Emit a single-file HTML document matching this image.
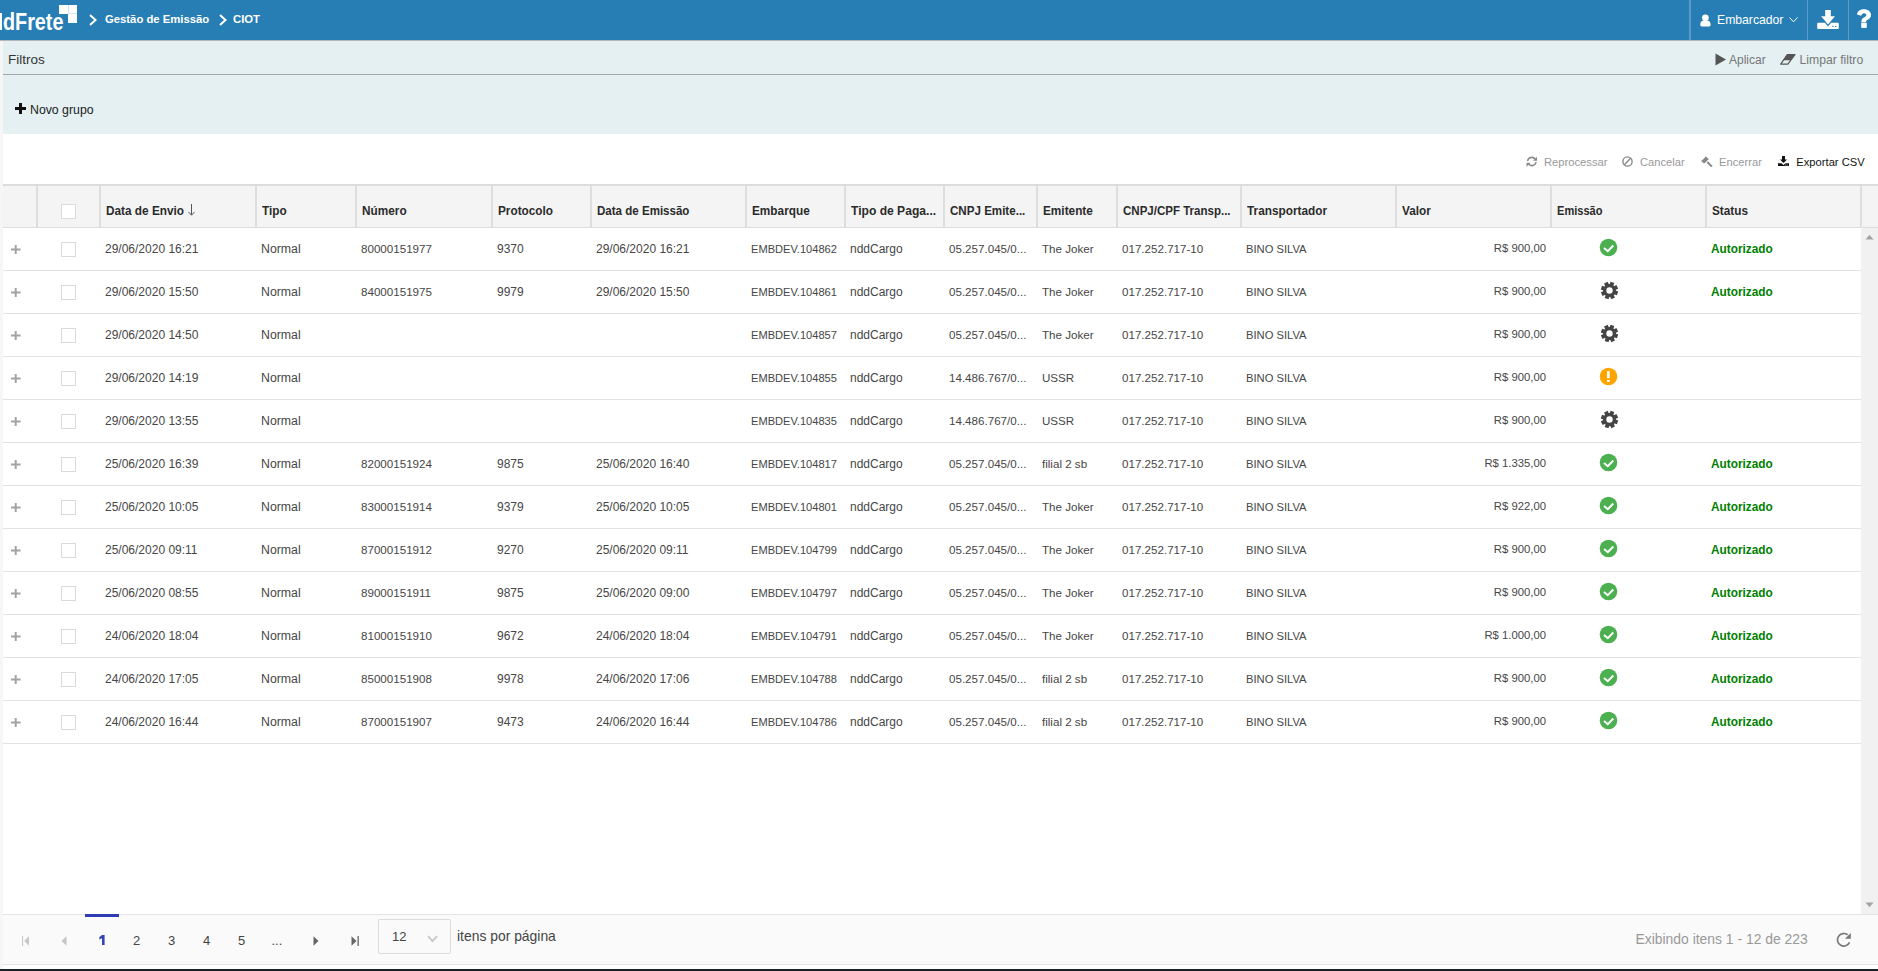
<!DOCTYPE html>
<html><head><meta charset="utf-8"><title>CIOT</title>
<style>
html,body{margin:0;padding:0}
body{width:1878px;height:971px;position:relative;overflow:hidden;background:#fff;font-family:"Liberation Sans", sans-serif}
.t{position:absolute;white-space:nowrap;line-height:1}
.b{position:absolute}
</style></head><body>
<div class="b" style="left:0px;top:0px;width:1878px;height:40px;background:#277eb4"></div>
<div class="t" style="left:3px;top:10.53px;font-size:23px;color:#fff;font-weight:bold;transform:scaleX(0.86);transform-origin:0 0">dFrete</div>
<div class="b" style="left:0px;top:13px;width:2px;height:17px;background:#fff"></div>
<div class="b" style="left:59px;top:5px;width:18px;height:9px;background:#fff"></div>
<div class="b" style="left:68px;top:13px;width:9px;height:10px;background:#fff"></div>
<div class="b" style="left:68px;top:5px;width:1px;height:9px;background:#d6e5f0"></div>
<div class="b" style="left:69px;top:13px;width:8px;height:1px;background:#d6e5f0"></div>
<svg class="b" style="left:89px;top:13.5px" width="8" height="12" viewBox="0 0 8 12"><path d="M1 1 L6.5 6.0 L1 11" fill="none" stroke="#fff" stroke-width="2"/></svg>
<div class="t " style="left:105px;top:14.23px;font-size:11.3px;color:#fff;font-weight:bold;">Gestão de Emissão</div>
<svg class="b" style="left:219px;top:13.5px" width="8" height="12" viewBox="0 0 8 12"><path d="M1 1 L6.5 6.0 L1 11" fill="none" stroke="#fff" stroke-width="2"/></svg>
<div class="t " style="left:233px;top:14.23px;font-size:11.3px;color:#fff;font-weight:bold;">CIOT</div>
<div class="b" style="left:1689px;top:0px;width:2px;height:40px;background:#5a9cc8"></div>
<div class="b" style="left:1807px;top:0px;width:1px;height:40px;background:#5a9cc8"></div>
<div class="b" style="left:1848px;top:0px;width:1px;height:40px;background:#5a9cc8"></div>
<svg class="b" style="left:1700px;top:13.5px" width="12" height="13" viewBox="0 0 12 13"><circle cx="5.4" cy="3.75" r="3.3" fill="#fff"/><path d="M0.3 10.5 C0.3 7.6 1.9 6.4 3.4 6.4 H7.4 C8.9 6.4 10.6 7.6 10.6 10.5 V11 Q10.6 12.4 9.2 12.4 H1.7 Q0.3 12.4 0.3 11 Z" fill="#fff"/></svg>
<div class="t " style="left:1717px;top:13.67px;font-size:12.2px;color:#fff;font-weight:normal;">Embarcador</div>
<svg class="b" style="left:1789px;top:17px" width="9" height="6" viewBox="0 0 9 6"><path d="M0.5 0.5 L4.5 4.8 L8.5 0.5" fill="none" stroke="#fff" stroke-width="1"/></svg>
<svg class="b" style="left:1817px;top:10px" width="22" height="19" viewBox="0 0 22 19"><path d="M8.2 0 H13.8 V6.3 H18 L11.05 14.6 L4.1 6.3 H8.2 Z" fill="#fff"/><path d="M1.2 12.8 H7.95 L11.05 16.5 L14.15 12.8 H20.8 Q21.8 12.8 21.8 13.8 V18 Q21.8 19 20.8 19 H1.2 Q0.2 19 0.2 18 V13.8 Q0.2 12.8 1.2 12.8 Z" fill="#fff"/><rect x="15.3" y="15.9" width="1.3" height="1.1" fill="#277eb4"/><rect x="18" y="15.9" width="1.3" height="1.1" fill="#277eb4"/></svg>
<svg class="b" style="left:1856px;top:9px" width="16" height="20" viewBox="0 0 16 20"><path d="M1 5.5 C1.5 2 4.3 0.3 8 0.3 C12 0.3 15 2.6 15 6 C15 9 13 10 11 11.2 C10 11.8 9.8 12.3 9.8 13.3 H5.3 C5.3 11 5.8 9.8 7.8 8.6 C9.5 7.6 10.3 7.1 10.3 6 C10.3 4.9 9.3 4.2 8 4.2 C6.6 4.2 5.7 5 5.3 6.8 Z" fill="#fff"/><rect x="5.2" y="13.7" width="5.6" height="5.2" fill="#fff"/></svg>
<div class="b" style="left:0px;top:40px;width:3px;height:931px;background:#f6f6f6"></div>
<div class="b" style="left:0px;top:40px;width:1878px;height:1px;background:#b4b8ba"></div>
<div class="b" style="left:3px;top:41px;width:1875px;height:93px;background:#e4f0f2"></div>
<div class="b" style="left:3px;top:74px;width:1875px;height:1px;background:#a3a7a9"></div>
<div class="t " style="left:8px;top:52.57px;font-size:13.5px;color:#333;font-weight:normal;">Filtros</div>
<svg class="b" style="left:1714.6px;top:52.6px" width="12" height="13" viewBox="0 0 12 13"><path d="M0.5 0.5 L11 6.5 L0.5 12.5 Z" fill="#555"/></svg>
<div class="t " style="left:1729px;top:53.84px;font-size:12px;color:#777;font-weight:normal;">Aplicar</div>
<svg class="b" style="left:1779.5px;top:53.5px" width="16" height="11" viewBox="0 0 16 11"><path d="M7.3 0.6 H15 L7.8 10.2 H0.7 Z" fill="none" stroke="#555" stroke-width="1.2" stroke-linejoin="round"/><path d="M7.3 0.6 H15 L10.8 6.2 H3.33 Z" fill="#555"/></svg>
<div class="t " style="left:1799.5px;top:53.67px;font-size:12.2px;color:#777;font-weight:normal;">Limpar filtro</div>
<svg class="b" style="left:15px;top:103px" width="11" height="11" viewBox="0 0 11 11"><path d="M4 0 H7 V4 H11 V7 H7 V11 H4 V7 H0 V4 H4 Z" fill="#111"/></svg>
<div class="t " style="left:30px;top:103.59px;font-size:12.3px;color:#222;font-weight:normal;">Novo grupo</div>
<svg class="b" style="left:1526px;top:156px" width="11" height="11" viewBox="0 0 11 11"><path d="M1.6 5.0 A4.2 4.2 0 0 1 9.2 3.2" fill="none" stroke="#888" stroke-width="1.5"/><path d="M11 0.8 V4.7 H7.1 Z" fill="#888"/><path d="M10 6.0 A4.2 4.2 0 0 1 2.4 7.8" fill="none" stroke="#888" stroke-width="1.5"/><path d="M0.5 10.7 V6.8 H4.4 Z" fill="#888"/></svg>
<div class="t " style="left:1544px;top:156.52px;font-size:11.2px;color:#999;font-weight:normal;">Reprocessar</div>
<svg class="b" style="left:1622px;top:156px" width="11" height="11" viewBox="0 0 11 11"><circle cx="5.5" cy="5.5" r="4.6" fill="none" stroke="#888" stroke-width="1.4"/><path d="M2.3 8.7 L8.7 2.3" stroke="#888" stroke-width="1.4"/></svg>
<div class="t " style="left:1640px;top:156.52px;font-size:11.2px;color:#999;font-weight:normal;">Cancelar</div>
<svg class="b" style="left:1701px;top:155px" width="12" height="12" viewBox="0 0 12 12"><path d="M4.6 1.2 L7.9 4.3 L6.8 4.9 L4.3 7.5 L3.1 8.6 L0 5.9 L1.1 5.2 L3.9 2.4 Z" fill="#888"/><path d="M6.3 7 L10.9 11.6" stroke="#888" stroke-width="2"/></svg>
<div class="t " style="left:1719px;top:156.52px;font-size:11.2px;color:#999;font-weight:normal;">Encerrar</div>
<svg class="b" style="left:1778px;top:155.8px" width="11" height="10.5" viewBox="0 0 11 10.5"><path d="M4 0 H7 V3.6 H9 L5.5 6.9 L2 3.6 H4 Z" fill="#111"/><path d="M0 7.2 H3.4 L5.5 8.9 L7.6 7.2 H11 V10.4 H0 Z" fill="#111"/><rect x="7.3" y="8.6" width="0.8" height="0.8" fill="#fff"/><rect x="8.8" y="8.6" width="0.8" height="0.8" fill="#fff"/></svg>
<div class="t " style="left:1796.3px;top:157.12px;font-size:11.2px;color:#111;font-weight:normal;">Exportar CSV</div>
<div class="b" style="left:3px;top:184px;width:1875px;height:44px;background:#f4f4f4"></div>
<div class="b" style="left:3px;top:184px;width:1875px;height:2px;background:#dcdcdc"></div>
<div class="b" style="left:3px;top:227px;width:1858px;height:1px;background:#dcdcdc"></div>
<div class="b" style="left:36px;top:186px;width:2px;height:41px;background:#dedede"></div>
<div class="b" style="left:99px;top:186px;width:2px;height:41px;background:#dedede"></div>
<div class="b" style="left:255px;top:186px;width:2px;height:41px;background:#dedede"></div>
<div class="b" style="left:355px;top:186px;width:2px;height:41px;background:#dedede"></div>
<div class="b" style="left:491px;top:186px;width:2px;height:41px;background:#dedede"></div>
<div class="b" style="left:590px;top:186px;width:2px;height:41px;background:#dedede"></div>
<div class="b" style="left:745px;top:186px;width:2px;height:41px;background:#dedede"></div>
<div class="b" style="left:844px;top:186px;width:2px;height:41px;background:#dedede"></div>
<div class="b" style="left:943px;top:186px;width:2px;height:41px;background:#dedede"></div>
<div class="b" style="left:1036px;top:186px;width:2px;height:41px;background:#dedede"></div>
<div class="b" style="left:1116px;top:186px;width:2px;height:41px;background:#dedede"></div>
<div class="b" style="left:1240px;top:186px;width:2px;height:41px;background:#dedede"></div>
<div class="b" style="left:1395px;top:186px;width:2px;height:41px;background:#dedede"></div>
<div class="b" style="left:1550px;top:186px;width:2px;height:41px;background:#dedede"></div>
<div class="b" style="left:1705px;top:186px;width:2px;height:41px;background:#dedede"></div>
<div class="b" style="left:1860px;top:186px;width:2px;height:41px;background:#dedede"></div>
<div class="b" style="left:1862px;top:227px;width:16px;height:1px;background:#dcdcdc"></div>
<div class="t " style="left:106px;top:204.63px;font-size:12.6px;color:#2b2b2b;font-weight:bold;transform:scaleX(0.937);transform-origin:0 0">Data de Envio</div>
<div class="t " style="left:262px;top:204.63px;font-size:12.6px;color:#2b2b2b;font-weight:bold;transform:scaleX(0.937);transform-origin:0 0">Tipo</div>
<div class="t " style="left:362px;top:204.63px;font-size:12.6px;color:#2b2b2b;font-weight:bold;transform:scaleX(0.937);transform-origin:0 0">Número</div>
<div class="t " style="left:498px;top:204.63px;font-size:12.6px;color:#2b2b2b;font-weight:bold;transform:scaleX(0.937);transform-origin:0 0">Protocolo</div>
<div class="t " style="left:597px;top:204.63px;font-size:12.6px;color:#2b2b2b;font-weight:bold;transform:scaleX(0.917);transform-origin:0 0">Data de Emissão</div>
<div class="t " style="left:752px;top:204.63px;font-size:12.6px;color:#2b2b2b;font-weight:bold;transform:scaleX(0.937);transform-origin:0 0">Embarque</div>
<div class="t " style="left:851px;top:204.63px;font-size:12.6px;color:#2b2b2b;font-weight:bold;transform:scaleX(0.96);transform-origin:0 0">Tipo de Paga...</div>
<div class="t " style="left:950px;top:204.63px;font-size:12.6px;color:#2b2b2b;font-weight:bold;transform:scaleX(0.92);transform-origin:0 0">CNPJ Emite...</div>
<div class="t " style="left:1043px;top:204.63px;font-size:12.6px;color:#2b2b2b;font-weight:bold;transform:scaleX(0.937);transform-origin:0 0">Emitente</div>
<div class="t " style="left:1123px;top:204.63px;font-size:12.6px;color:#2b2b2b;font-weight:bold;transform:scaleX(0.915);transform-origin:0 0">CNPJ/CPF Transp...</div>
<div class="t " style="left:1247px;top:204.63px;font-size:12.6px;color:#2b2b2b;font-weight:bold;transform:scaleX(0.937);transform-origin:0 0">Transportador</div>
<div class="t " style="left:1402px;top:204.63px;font-size:12.6px;color:#2b2b2b;font-weight:bold;transform:scaleX(0.937);transform-origin:0 0">Valor</div>
<div class="t " style="left:1557px;top:204.63px;font-size:12.6px;color:#2b2b2b;font-weight:bold;transform:scaleX(0.878);transform-origin:0 0">Emissão</div>
<div class="t " style="left:1712px;top:204.63px;font-size:12.6px;color:#2b2b2b;font-weight:bold;transform:scaleX(0.937);transform-origin:0 0">Status</div>
<svg class="b" style="left:188px;top:204px" width="7" height="12" viewBox="0 0 7 12"><path d="M3.5 0 V11" stroke="#555" stroke-width="1"/><path d="M0.5 8 L3.5 11.2 L6.5 8" fill="none" stroke="#555" stroke-width="1"/></svg>
<div class="b" style="left:61px;top:204px;width:15px;height:15px;background:#fff;border:1px solid #dadada;box-sizing:border-box"></div>
<div class="b" style="left:3px;top:270px;width:1858px;height:1px;background:#e2e2e2"></div>
<svg class="b" style="left:11.3px;top:244.8px" width="9.6" height="9.2" viewBox="0 0 9.6 9.2"><path d="M3.7 0 H5.7 V3.6 H9.6 V5.6 H5.7 V9.2 H3.7 V5.6 H0 V3.6 H3.7 Z" fill="#a3a3a3"/></svg>
<div class="b" style="left:61px;top:242px;width:15px;height:15px;background:#fff;border:1px solid #dadada;box-sizing:border-box"></div>
<div class="t " style="left:105px;top:242.84px;font-size:12px;color:#464646;font-weight:normal;">29/06/2020 16:21</div>
<div class="t " style="left:261px;top:242.59px;font-size:12.3px;color:#464646;font-weight:normal;">Normal</div>
<div class="t " style="left:361px;top:243.18px;font-size:11.6px;color:#464646;font-weight:normal;">80000151977</div>
<div class="t " style="left:497px;top:242.84px;font-size:12px;color:#464646;font-weight:normal;">9370</div>
<div class="t " style="left:596px;top:242.84px;font-size:12px;color:#464646;font-weight:normal;">29/06/2020 16:21</div>
<div class="t " style="left:751px;top:243.60px;font-size:11.1px;color:#464646;font-weight:normal;">EMBDEV.104862</div>
<div class="t " style="left:850px;top:242.84px;font-size:12px;color:#464646;font-weight:normal;">nddCargo</div>
<div class="t " style="left:949px;top:243.18px;font-size:11.6px;color:#464646;font-weight:normal;">05.257.045/0...</div>
<div class="t " style="left:1042px;top:243.18px;font-size:11.6px;color:#464646;font-weight:normal;">The Joker</div>
<div class="t " style="left:1122px;top:243.18px;font-size:11.6px;color:#464646;font-weight:normal;">017.252.717-10</div>
<div class="t " style="left:1246px;top:243.52px;font-size:11.2px;color:#464646;font-weight:normal;">BINO SILVA</div>
<div class="t" style="right:332px;top:243.43px;font-size:11.3px;color:#464646">R$ 900,00</div>
<svg class="b" style="left:1598.5px;top:238.3px" width="19" height="19" viewBox="0 0 19 19"><circle cx="9.5" cy="9.5" r="8.8" fill="#4caf50"/><path d="M5 9.9 L8.8 13.2 L14.3 7.5" fill="none" stroke="#fff" stroke-width="2"/></svg>
<div class="t " style="left:1711px;top:243.36px;font-size:12.8px;color:#008000;font-weight:bold;transform:scaleX(0.925);transform-origin:0 0">Autorizado</div>
<div class="b" style="left:3px;top:313px;width:1858px;height:1px;background:#e2e2e2"></div>
<svg class="b" style="left:11.3px;top:287.8px" width="9.6" height="9.2" viewBox="0 0 9.6 9.2"><path d="M3.7 0 H5.7 V3.6 H9.6 V5.6 H5.7 V9.2 H3.7 V5.6 H0 V3.6 H3.7 Z" fill="#a3a3a3"/></svg>
<div class="b" style="left:61px;top:285px;width:15px;height:15px;background:#fff;border:1px solid #dadada;box-sizing:border-box"></div>
<div class="t " style="left:105px;top:285.84px;font-size:12px;color:#464646;font-weight:normal;">29/06/2020 15:50</div>
<div class="t " style="left:261px;top:285.59px;font-size:12.3px;color:#464646;font-weight:normal;">Normal</div>
<div class="t " style="left:361px;top:286.18px;font-size:11.6px;color:#464646;font-weight:normal;">84000151975</div>
<div class="t " style="left:497px;top:285.84px;font-size:12px;color:#464646;font-weight:normal;">9979</div>
<div class="t " style="left:596px;top:285.84px;font-size:12px;color:#464646;font-weight:normal;">29/06/2020 15:50</div>
<div class="t " style="left:751px;top:286.60px;font-size:11.1px;color:#464646;font-weight:normal;">EMBDEV.104861</div>
<div class="t " style="left:850px;top:285.84px;font-size:12px;color:#464646;font-weight:normal;">nddCargo</div>
<div class="t " style="left:949px;top:286.18px;font-size:11.6px;color:#464646;font-weight:normal;">05.257.045/0...</div>
<div class="t " style="left:1042px;top:286.18px;font-size:11.6px;color:#464646;font-weight:normal;">The Joker</div>
<div class="t " style="left:1122px;top:286.18px;font-size:11.6px;color:#464646;font-weight:normal;">017.252.717-10</div>
<div class="t " style="left:1246px;top:286.52px;font-size:11.2px;color:#464646;font-weight:normal;">BINO SILVA</div>
<div class="t" style="right:332px;top:286.43px;font-size:11.3px;color:#464646">R$ 900,00</div>
<svg class="b" style="left:1599.6px;top:281.3px" width="19" height="19" viewBox="0 0 19 19"><g fill="#444" transform="translate(9.5 9.5)"><rect x="-2" y="-8.6" width="4" height="4.5" transform="rotate(20)"/><rect x="-2" y="-8.6" width="4" height="4.5" transform="rotate(65)"/><rect x="-2" y="-8.6" width="4" height="4.5" transform="rotate(110)"/><rect x="-2" y="-8.6" width="4" height="4.5" transform="rotate(155)"/><rect x="-2" y="-8.6" width="4" height="4.5" transform="rotate(200)"/><rect x="-2" y="-8.6" width="4" height="4.5" transform="rotate(245)"/><rect x="-2" y="-8.6" width="4" height="4.5" transform="rotate(290)"/><rect x="-2" y="-8.6" width="4" height="4.5" transform="rotate(335)"/><circle r="6.4"/></g><circle cx="9.5" cy="9.5" r="3.2" fill="#fff"/></svg>
<div class="t " style="left:1711px;top:286.36px;font-size:12.8px;color:#008000;font-weight:bold;transform:scaleX(0.925);transform-origin:0 0">Autorizado</div>
<div class="b" style="left:3px;top:356px;width:1858px;height:1px;background:#e2e2e2"></div>
<svg class="b" style="left:11.3px;top:330.8px" width="9.6" height="9.2" viewBox="0 0 9.6 9.2"><path d="M3.7 0 H5.7 V3.6 H9.6 V5.6 H5.7 V9.2 H3.7 V5.6 H0 V3.6 H3.7 Z" fill="#a3a3a3"/></svg>
<div class="b" style="left:61px;top:328px;width:15px;height:15px;background:#fff;border:1px solid #dadada;box-sizing:border-box"></div>
<div class="t " style="left:105px;top:328.84px;font-size:12px;color:#464646;font-weight:normal;">29/06/2020 14:50</div>
<div class="t " style="left:261px;top:328.59px;font-size:12.3px;color:#464646;font-weight:normal;">Normal</div>
<div class="t " style="left:751px;top:329.60px;font-size:11.1px;color:#464646;font-weight:normal;">EMBDEV.104857</div>
<div class="t " style="left:850px;top:328.84px;font-size:12px;color:#464646;font-weight:normal;">nddCargo</div>
<div class="t " style="left:949px;top:329.18px;font-size:11.6px;color:#464646;font-weight:normal;">05.257.045/0...</div>
<div class="t " style="left:1042px;top:329.18px;font-size:11.6px;color:#464646;font-weight:normal;">The Joker</div>
<div class="t " style="left:1122px;top:329.18px;font-size:11.6px;color:#464646;font-weight:normal;">017.252.717-10</div>
<div class="t " style="left:1246px;top:329.52px;font-size:11.2px;color:#464646;font-weight:normal;">BINO SILVA</div>
<div class="t" style="right:332px;top:329.43px;font-size:11.3px;color:#464646">R$ 900,00</div>
<svg class="b" style="left:1599.6px;top:324.3px" width="19" height="19" viewBox="0 0 19 19"><g fill="#444" transform="translate(9.5 9.5)"><rect x="-2" y="-8.6" width="4" height="4.5" transform="rotate(20)"/><rect x="-2" y="-8.6" width="4" height="4.5" transform="rotate(65)"/><rect x="-2" y="-8.6" width="4" height="4.5" transform="rotate(110)"/><rect x="-2" y="-8.6" width="4" height="4.5" transform="rotate(155)"/><rect x="-2" y="-8.6" width="4" height="4.5" transform="rotate(200)"/><rect x="-2" y="-8.6" width="4" height="4.5" transform="rotate(245)"/><rect x="-2" y="-8.6" width="4" height="4.5" transform="rotate(290)"/><rect x="-2" y="-8.6" width="4" height="4.5" transform="rotate(335)"/><circle r="6.4"/></g><circle cx="9.5" cy="9.5" r="3.2" fill="#fff"/></svg>
<div class="b" style="left:3px;top:399px;width:1858px;height:1px;background:#e2e2e2"></div>
<svg class="b" style="left:11.3px;top:373.8px" width="9.6" height="9.2" viewBox="0 0 9.6 9.2"><path d="M3.7 0 H5.7 V3.6 H9.6 V5.6 H5.7 V9.2 H3.7 V5.6 H0 V3.6 H3.7 Z" fill="#a3a3a3"/></svg>
<div class="b" style="left:61px;top:371px;width:15px;height:15px;background:#fff;border:1px solid #dadada;box-sizing:border-box"></div>
<div class="t " style="left:105px;top:371.84px;font-size:12px;color:#464646;font-weight:normal;">29/06/2020 14:19</div>
<div class="t " style="left:261px;top:371.59px;font-size:12.3px;color:#464646;font-weight:normal;">Normal</div>
<div class="t " style="left:751px;top:372.60px;font-size:11.1px;color:#464646;font-weight:normal;">EMBDEV.104855</div>
<div class="t " style="left:850px;top:371.84px;font-size:12px;color:#464646;font-weight:normal;">nddCargo</div>
<div class="t " style="left:949px;top:372.18px;font-size:11.6px;color:#464646;font-weight:normal;">14.486.767/0...</div>
<div class="t " style="left:1042px;top:372.18px;font-size:11.6px;color:#464646;font-weight:normal;">USSR</div>
<div class="t " style="left:1122px;top:372.18px;font-size:11.6px;color:#464646;font-weight:normal;">017.252.717-10</div>
<div class="t " style="left:1246px;top:372.52px;font-size:11.2px;color:#464646;font-weight:normal;">BINO SILVA</div>
<div class="t" style="right:332px;top:372.43px;font-size:11.3px;color:#464646">R$ 900,00</div>
<svg class="b" style="left:1598.5px;top:367.3px" width="19" height="19" viewBox="0 0 19 19"><circle cx="9.5" cy="9.5" r="8.8" fill="#ffa500"/><rect x="8.1" y="4.1" width="2.6" height="7.2" fill="#fff"/><rect x="8.1" y="13" width="2.6" height="1.9" fill="#fff"/></svg>
<div class="b" style="left:3px;top:442px;width:1858px;height:1px;background:#e2e2e2"></div>
<svg class="b" style="left:11.3px;top:416.8px" width="9.6" height="9.2" viewBox="0 0 9.6 9.2"><path d="M3.7 0 H5.7 V3.6 H9.6 V5.6 H5.7 V9.2 H3.7 V5.6 H0 V3.6 H3.7 Z" fill="#a3a3a3"/></svg>
<div class="b" style="left:61px;top:414px;width:15px;height:15px;background:#fff;border:1px solid #dadada;box-sizing:border-box"></div>
<div class="t " style="left:105px;top:414.84px;font-size:12px;color:#464646;font-weight:normal;">29/06/2020 13:55</div>
<div class="t " style="left:261px;top:414.59px;font-size:12.3px;color:#464646;font-weight:normal;">Normal</div>
<div class="t " style="left:751px;top:415.60px;font-size:11.1px;color:#464646;font-weight:normal;">EMBDEV.104835</div>
<div class="t " style="left:850px;top:414.84px;font-size:12px;color:#464646;font-weight:normal;">nddCargo</div>
<div class="t " style="left:949px;top:415.18px;font-size:11.6px;color:#464646;font-weight:normal;">14.486.767/0...</div>
<div class="t " style="left:1042px;top:415.18px;font-size:11.6px;color:#464646;font-weight:normal;">USSR</div>
<div class="t " style="left:1122px;top:415.18px;font-size:11.6px;color:#464646;font-weight:normal;">017.252.717-10</div>
<div class="t " style="left:1246px;top:415.52px;font-size:11.2px;color:#464646;font-weight:normal;">BINO SILVA</div>
<div class="t" style="right:332px;top:415.43px;font-size:11.3px;color:#464646">R$ 900,00</div>
<svg class="b" style="left:1599.6px;top:410.3px" width="19" height="19" viewBox="0 0 19 19"><g fill="#444" transform="translate(9.5 9.5)"><rect x="-2" y="-8.6" width="4" height="4.5" transform="rotate(20)"/><rect x="-2" y="-8.6" width="4" height="4.5" transform="rotate(65)"/><rect x="-2" y="-8.6" width="4" height="4.5" transform="rotate(110)"/><rect x="-2" y="-8.6" width="4" height="4.5" transform="rotate(155)"/><rect x="-2" y="-8.6" width="4" height="4.5" transform="rotate(200)"/><rect x="-2" y="-8.6" width="4" height="4.5" transform="rotate(245)"/><rect x="-2" y="-8.6" width="4" height="4.5" transform="rotate(290)"/><rect x="-2" y="-8.6" width="4" height="4.5" transform="rotate(335)"/><circle r="6.4"/></g><circle cx="9.5" cy="9.5" r="3.2" fill="#fff"/></svg>
<div class="b" style="left:3px;top:485px;width:1858px;height:1px;background:#e2e2e2"></div>
<svg class="b" style="left:11.3px;top:459.8px" width="9.6" height="9.2" viewBox="0 0 9.6 9.2"><path d="M3.7 0 H5.7 V3.6 H9.6 V5.6 H5.7 V9.2 H3.7 V5.6 H0 V3.6 H3.7 Z" fill="#a3a3a3"/></svg>
<div class="b" style="left:61px;top:457px;width:15px;height:15px;background:#fff;border:1px solid #dadada;box-sizing:border-box"></div>
<div class="t " style="left:105px;top:457.84px;font-size:12px;color:#464646;font-weight:normal;">25/06/2020 16:39</div>
<div class="t " style="left:261px;top:457.59px;font-size:12.3px;color:#464646;font-weight:normal;">Normal</div>
<div class="t " style="left:361px;top:458.18px;font-size:11.6px;color:#464646;font-weight:normal;">82000151924</div>
<div class="t " style="left:497px;top:457.84px;font-size:12px;color:#464646;font-weight:normal;">9875</div>
<div class="t " style="left:596px;top:457.84px;font-size:12px;color:#464646;font-weight:normal;">25/06/2020 16:40</div>
<div class="t " style="left:751px;top:458.60px;font-size:11.1px;color:#464646;font-weight:normal;">EMBDEV.104817</div>
<div class="t " style="left:850px;top:457.84px;font-size:12px;color:#464646;font-weight:normal;">nddCargo</div>
<div class="t " style="left:949px;top:458.18px;font-size:11.6px;color:#464646;font-weight:normal;">05.257.045/0...</div>
<div class="t " style="left:1042px;top:458.18px;font-size:11.6px;color:#464646;font-weight:normal;">filial 2 sb</div>
<div class="t " style="left:1122px;top:458.18px;font-size:11.6px;color:#464646;font-weight:normal;">017.252.717-10</div>
<div class="t " style="left:1246px;top:458.52px;font-size:11.2px;color:#464646;font-weight:normal;">BINO SILVA</div>
<div class="t" style="right:332px;top:458.43px;font-size:11.3px;color:#464646">R$ 1.335,00</div>
<svg class="b" style="left:1598.5px;top:453.3px" width="19" height="19" viewBox="0 0 19 19"><circle cx="9.5" cy="9.5" r="8.8" fill="#4caf50"/><path d="M5 9.9 L8.8 13.2 L14.3 7.5" fill="none" stroke="#fff" stroke-width="2"/></svg>
<div class="t " style="left:1711px;top:458.36px;font-size:12.8px;color:#008000;font-weight:bold;transform:scaleX(0.925);transform-origin:0 0">Autorizado</div>
<div class="b" style="left:3px;top:528px;width:1858px;height:1px;background:#e2e2e2"></div>
<svg class="b" style="left:11.3px;top:502.8px" width="9.6" height="9.2" viewBox="0 0 9.6 9.2"><path d="M3.7 0 H5.7 V3.6 H9.6 V5.6 H5.7 V9.2 H3.7 V5.6 H0 V3.6 H3.7 Z" fill="#a3a3a3"/></svg>
<div class="b" style="left:61px;top:500px;width:15px;height:15px;background:#fff;border:1px solid #dadada;box-sizing:border-box"></div>
<div class="t " style="left:105px;top:500.84px;font-size:12px;color:#464646;font-weight:normal;">25/06/2020 10:05</div>
<div class="t " style="left:261px;top:500.59px;font-size:12.3px;color:#464646;font-weight:normal;">Normal</div>
<div class="t " style="left:361px;top:501.18px;font-size:11.6px;color:#464646;font-weight:normal;">83000151914</div>
<div class="t " style="left:497px;top:500.84px;font-size:12px;color:#464646;font-weight:normal;">9379</div>
<div class="t " style="left:596px;top:500.84px;font-size:12px;color:#464646;font-weight:normal;">25/06/2020 10:05</div>
<div class="t " style="left:751px;top:501.60px;font-size:11.1px;color:#464646;font-weight:normal;">EMBDEV.104801</div>
<div class="t " style="left:850px;top:500.84px;font-size:12px;color:#464646;font-weight:normal;">nddCargo</div>
<div class="t " style="left:949px;top:501.18px;font-size:11.6px;color:#464646;font-weight:normal;">05.257.045/0...</div>
<div class="t " style="left:1042px;top:501.18px;font-size:11.6px;color:#464646;font-weight:normal;">The Joker</div>
<div class="t " style="left:1122px;top:501.18px;font-size:11.6px;color:#464646;font-weight:normal;">017.252.717-10</div>
<div class="t " style="left:1246px;top:501.52px;font-size:11.2px;color:#464646;font-weight:normal;">BINO SILVA</div>
<div class="t" style="right:332px;top:501.43px;font-size:11.3px;color:#464646">R$ 922,00</div>
<svg class="b" style="left:1598.5px;top:496.3px" width="19" height="19" viewBox="0 0 19 19"><circle cx="9.5" cy="9.5" r="8.8" fill="#4caf50"/><path d="M5 9.9 L8.8 13.2 L14.3 7.5" fill="none" stroke="#fff" stroke-width="2"/></svg>
<div class="t " style="left:1711px;top:501.36px;font-size:12.8px;color:#008000;font-weight:bold;transform:scaleX(0.925);transform-origin:0 0">Autorizado</div>
<div class="b" style="left:3px;top:571px;width:1858px;height:1px;background:#e2e2e2"></div>
<svg class="b" style="left:11.3px;top:545.8px" width="9.6" height="9.2" viewBox="0 0 9.6 9.2"><path d="M3.7 0 H5.7 V3.6 H9.6 V5.6 H5.7 V9.2 H3.7 V5.6 H0 V3.6 H3.7 Z" fill="#a3a3a3"/></svg>
<div class="b" style="left:61px;top:543px;width:15px;height:15px;background:#fff;border:1px solid #dadada;box-sizing:border-box"></div>
<div class="t " style="left:105px;top:543.84px;font-size:12px;color:#464646;font-weight:normal;">25/06/2020 09:11</div>
<div class="t " style="left:261px;top:543.59px;font-size:12.3px;color:#464646;font-weight:normal;">Normal</div>
<div class="t " style="left:361px;top:544.18px;font-size:11.6px;color:#464646;font-weight:normal;">87000151912</div>
<div class="t " style="left:497px;top:543.84px;font-size:12px;color:#464646;font-weight:normal;">9270</div>
<div class="t " style="left:596px;top:543.84px;font-size:12px;color:#464646;font-weight:normal;">25/06/2020 09:11</div>
<div class="t " style="left:751px;top:544.60px;font-size:11.1px;color:#464646;font-weight:normal;">EMBDEV.104799</div>
<div class="t " style="left:850px;top:543.84px;font-size:12px;color:#464646;font-weight:normal;">nddCargo</div>
<div class="t " style="left:949px;top:544.18px;font-size:11.6px;color:#464646;font-weight:normal;">05.257.045/0...</div>
<div class="t " style="left:1042px;top:544.18px;font-size:11.6px;color:#464646;font-weight:normal;">The Joker</div>
<div class="t " style="left:1122px;top:544.18px;font-size:11.6px;color:#464646;font-weight:normal;">017.252.717-10</div>
<div class="t " style="left:1246px;top:544.52px;font-size:11.2px;color:#464646;font-weight:normal;">BINO SILVA</div>
<div class="t" style="right:332px;top:544.43px;font-size:11.3px;color:#464646">R$ 900,00</div>
<svg class="b" style="left:1598.5px;top:539.3px" width="19" height="19" viewBox="0 0 19 19"><circle cx="9.5" cy="9.5" r="8.8" fill="#4caf50"/><path d="M5 9.9 L8.8 13.2 L14.3 7.5" fill="none" stroke="#fff" stroke-width="2"/></svg>
<div class="t " style="left:1711px;top:544.36px;font-size:12.8px;color:#008000;font-weight:bold;transform:scaleX(0.925);transform-origin:0 0">Autorizado</div>
<div class="b" style="left:3px;top:614px;width:1858px;height:1px;background:#e2e2e2"></div>
<svg class="b" style="left:11.3px;top:588.8px" width="9.6" height="9.2" viewBox="0 0 9.6 9.2"><path d="M3.7 0 H5.7 V3.6 H9.6 V5.6 H5.7 V9.2 H3.7 V5.6 H0 V3.6 H3.7 Z" fill="#a3a3a3"/></svg>
<div class="b" style="left:61px;top:586px;width:15px;height:15px;background:#fff;border:1px solid #dadada;box-sizing:border-box"></div>
<div class="t " style="left:105px;top:586.84px;font-size:12px;color:#464646;font-weight:normal;">25/06/2020 08:55</div>
<div class="t " style="left:261px;top:586.59px;font-size:12.3px;color:#464646;font-weight:normal;">Normal</div>
<div class="t " style="left:361px;top:587.18px;font-size:11.6px;color:#464646;font-weight:normal;">89000151911</div>
<div class="t " style="left:497px;top:586.84px;font-size:12px;color:#464646;font-weight:normal;">9875</div>
<div class="t " style="left:596px;top:586.84px;font-size:12px;color:#464646;font-weight:normal;">25/06/2020 09:00</div>
<div class="t " style="left:751px;top:587.60px;font-size:11.1px;color:#464646;font-weight:normal;">EMBDEV.104797</div>
<div class="t " style="left:850px;top:586.84px;font-size:12px;color:#464646;font-weight:normal;">nddCargo</div>
<div class="t " style="left:949px;top:587.18px;font-size:11.6px;color:#464646;font-weight:normal;">05.257.045/0...</div>
<div class="t " style="left:1042px;top:587.18px;font-size:11.6px;color:#464646;font-weight:normal;">The Joker</div>
<div class="t " style="left:1122px;top:587.18px;font-size:11.6px;color:#464646;font-weight:normal;">017.252.717-10</div>
<div class="t " style="left:1246px;top:587.52px;font-size:11.2px;color:#464646;font-weight:normal;">BINO SILVA</div>
<div class="t" style="right:332px;top:587.43px;font-size:11.3px;color:#464646">R$ 900,00</div>
<svg class="b" style="left:1598.5px;top:582.3px" width="19" height="19" viewBox="0 0 19 19"><circle cx="9.5" cy="9.5" r="8.8" fill="#4caf50"/><path d="M5 9.9 L8.8 13.2 L14.3 7.5" fill="none" stroke="#fff" stroke-width="2"/></svg>
<div class="t " style="left:1711px;top:587.36px;font-size:12.8px;color:#008000;font-weight:bold;transform:scaleX(0.925);transform-origin:0 0">Autorizado</div>
<div class="b" style="left:3px;top:657px;width:1858px;height:1px;background:#e2e2e2"></div>
<svg class="b" style="left:11.3px;top:631.8px" width="9.6" height="9.2" viewBox="0 0 9.6 9.2"><path d="M3.7 0 H5.7 V3.6 H9.6 V5.6 H5.7 V9.2 H3.7 V5.6 H0 V3.6 H3.7 Z" fill="#a3a3a3"/></svg>
<div class="b" style="left:61px;top:629px;width:15px;height:15px;background:#fff;border:1px solid #dadada;box-sizing:border-box"></div>
<div class="t " style="left:105px;top:629.84px;font-size:12px;color:#464646;font-weight:normal;">24/06/2020 18:04</div>
<div class="t " style="left:261px;top:629.59px;font-size:12.3px;color:#464646;font-weight:normal;">Normal</div>
<div class="t " style="left:361px;top:630.18px;font-size:11.6px;color:#464646;font-weight:normal;">81000151910</div>
<div class="t " style="left:497px;top:629.84px;font-size:12px;color:#464646;font-weight:normal;">9672</div>
<div class="t " style="left:596px;top:629.84px;font-size:12px;color:#464646;font-weight:normal;">24/06/2020 18:04</div>
<div class="t " style="left:751px;top:630.60px;font-size:11.1px;color:#464646;font-weight:normal;">EMBDEV.104791</div>
<div class="t " style="left:850px;top:629.84px;font-size:12px;color:#464646;font-weight:normal;">nddCargo</div>
<div class="t " style="left:949px;top:630.18px;font-size:11.6px;color:#464646;font-weight:normal;">05.257.045/0...</div>
<div class="t " style="left:1042px;top:630.18px;font-size:11.6px;color:#464646;font-weight:normal;">The Joker</div>
<div class="t " style="left:1122px;top:630.18px;font-size:11.6px;color:#464646;font-weight:normal;">017.252.717-10</div>
<div class="t " style="left:1246px;top:630.52px;font-size:11.2px;color:#464646;font-weight:normal;">BINO SILVA</div>
<div class="t" style="right:332px;top:630.43px;font-size:11.3px;color:#464646">R$ 1.000,00</div>
<svg class="b" style="left:1598.5px;top:625.3px" width="19" height="19" viewBox="0 0 19 19"><circle cx="9.5" cy="9.5" r="8.8" fill="#4caf50"/><path d="M5 9.9 L8.8 13.2 L14.3 7.5" fill="none" stroke="#fff" stroke-width="2"/></svg>
<div class="t " style="left:1711px;top:630.36px;font-size:12.8px;color:#008000;font-weight:bold;transform:scaleX(0.925);transform-origin:0 0">Autorizado</div>
<div class="b" style="left:3px;top:700px;width:1858px;height:1px;background:#e2e2e2"></div>
<svg class="b" style="left:11.3px;top:674.8px" width="9.6" height="9.2" viewBox="0 0 9.6 9.2"><path d="M3.7 0 H5.7 V3.6 H9.6 V5.6 H5.7 V9.2 H3.7 V5.6 H0 V3.6 H3.7 Z" fill="#a3a3a3"/></svg>
<div class="b" style="left:61px;top:672px;width:15px;height:15px;background:#fff;border:1px solid #dadada;box-sizing:border-box"></div>
<div class="t " style="left:105px;top:672.84px;font-size:12px;color:#464646;font-weight:normal;">24/06/2020 17:05</div>
<div class="t " style="left:261px;top:672.59px;font-size:12.3px;color:#464646;font-weight:normal;">Normal</div>
<div class="t " style="left:361px;top:673.18px;font-size:11.6px;color:#464646;font-weight:normal;">85000151908</div>
<div class="t " style="left:497px;top:672.84px;font-size:12px;color:#464646;font-weight:normal;">9978</div>
<div class="t " style="left:596px;top:672.84px;font-size:12px;color:#464646;font-weight:normal;">24/06/2020 17:06</div>
<div class="t " style="left:751px;top:673.60px;font-size:11.1px;color:#464646;font-weight:normal;">EMBDEV.104788</div>
<div class="t " style="left:850px;top:672.84px;font-size:12px;color:#464646;font-weight:normal;">nddCargo</div>
<div class="t " style="left:949px;top:673.18px;font-size:11.6px;color:#464646;font-weight:normal;">05.257.045/0...</div>
<div class="t " style="left:1042px;top:673.18px;font-size:11.6px;color:#464646;font-weight:normal;">filial 2 sb</div>
<div class="t " style="left:1122px;top:673.18px;font-size:11.6px;color:#464646;font-weight:normal;">017.252.717-10</div>
<div class="t " style="left:1246px;top:673.52px;font-size:11.2px;color:#464646;font-weight:normal;">BINO SILVA</div>
<div class="t" style="right:332px;top:673.43px;font-size:11.3px;color:#464646">R$ 900,00</div>
<svg class="b" style="left:1598.5px;top:668.3px" width="19" height="19" viewBox="0 0 19 19"><circle cx="9.5" cy="9.5" r="8.8" fill="#4caf50"/><path d="M5 9.9 L8.8 13.2 L14.3 7.5" fill="none" stroke="#fff" stroke-width="2"/></svg>
<div class="t " style="left:1711px;top:673.36px;font-size:12.8px;color:#008000;font-weight:bold;transform:scaleX(0.925);transform-origin:0 0">Autorizado</div>
<div class="b" style="left:3px;top:743px;width:1858px;height:1px;background:#e2e2e2"></div>
<svg class="b" style="left:11.3px;top:717.8px" width="9.6" height="9.2" viewBox="0 0 9.6 9.2"><path d="M3.7 0 H5.7 V3.6 H9.6 V5.6 H5.7 V9.2 H3.7 V5.6 H0 V3.6 H3.7 Z" fill="#a3a3a3"/></svg>
<div class="b" style="left:61px;top:715px;width:15px;height:15px;background:#fff;border:1px solid #dadada;box-sizing:border-box"></div>
<div class="t " style="left:105px;top:715.84px;font-size:12px;color:#464646;font-weight:normal;">24/06/2020 16:44</div>
<div class="t " style="left:261px;top:715.59px;font-size:12.3px;color:#464646;font-weight:normal;">Normal</div>
<div class="t " style="left:361px;top:716.18px;font-size:11.6px;color:#464646;font-weight:normal;">87000151907</div>
<div class="t " style="left:497px;top:715.84px;font-size:12px;color:#464646;font-weight:normal;">9473</div>
<div class="t " style="left:596px;top:715.84px;font-size:12px;color:#464646;font-weight:normal;">24/06/2020 16:44</div>
<div class="t " style="left:751px;top:716.60px;font-size:11.1px;color:#464646;font-weight:normal;">EMBDEV.104786</div>
<div class="t " style="left:850px;top:715.84px;font-size:12px;color:#464646;font-weight:normal;">nddCargo</div>
<div class="t " style="left:949px;top:716.18px;font-size:11.6px;color:#464646;font-weight:normal;">05.257.045/0...</div>
<div class="t " style="left:1042px;top:716.18px;font-size:11.6px;color:#464646;font-weight:normal;">filial 2 sb</div>
<div class="t " style="left:1122px;top:716.18px;font-size:11.6px;color:#464646;font-weight:normal;">017.252.717-10</div>
<div class="t " style="left:1246px;top:716.52px;font-size:11.2px;color:#464646;font-weight:normal;">BINO SILVA</div>
<div class="t" style="right:332px;top:716.43px;font-size:11.3px;color:#464646">R$ 900,00</div>
<svg class="b" style="left:1598.5px;top:711.3px" width="19" height="19" viewBox="0 0 19 19"><circle cx="9.5" cy="9.5" r="8.8" fill="#4caf50"/><path d="M5 9.9 L8.8 13.2 L14.3 7.5" fill="none" stroke="#fff" stroke-width="2"/></svg>
<div class="t " style="left:1711px;top:716.36px;font-size:12.8px;color:#008000;font-weight:bold;transform:scaleX(0.925);transform-origin:0 0">Autorizado</div>
<div class="b" style="left:1861px;top:228px;width:17px;height:686px;background:#f1f1f1"></div>
<svg class="b" style="left:1865px;top:234px" width="9" height="6" viewBox="0 0 9 6"><path d="M0.5 5.5 L4.5 0.8 L8.5 5.5 Z" fill="#a3a3a3"/></svg>
<svg class="b" style="left:1865px;top:902px" width="9" height="6" viewBox="0 0 9 6"><path d="M0.5 0.5 L4.5 5.2 L8.5 0.5 Z" fill="#a3a3a3"/></svg>
<div class="b" style="left:3px;top:914px;width:1875px;height:51px;background:#fafafa"></div>
<div class="b" style="left:3px;top:914px;width:1875px;height:1px;background:#e4e4e4"></div>
<div class="b" style="left:3px;top:964px;width:1875px;height:1px;background:#e4e4e4"></div>
<div class="b" style="left:3px;top:965px;width:1875px;height:4px;background:#fff"></div>
<div class="b" style="left:0px;top:969px;width:1878px;height:2px;background:#1b2128"></div>
<div class="b" style="left:85px;top:914px;width:34px;height:3px;background:#2f3db5"></div>
<svg class="b" style="left:22px;top:936px" width="8" height="10" viewBox="0 0 8 10"><rect x="0" y="0" width="1.1" height="10" fill="#c8c8c8"/><path d="M7 0 L2.2 4.9 L7 9.8 Z" fill="#c8c8c8"/></svg>
<svg class="b" style="left:61px;top:936px" width="6" height="10" viewBox="0 0 6 10"><path d="M5.5 0.2 L0.5 5 L5.5 9.8 Z" fill="#c4c4c4"/></svg>
<svg class="b" style="left:98.6px;top:934.9px" width="6" height="10.2" viewBox="0 0 6 10.2"><path d="M3 0 H5.6 V10 H3 V3.2 L0.3 4.6 V2.2 Z" fill="#3343b3"/></svg>
<div class="t " style="left:133px;top:934.00px;font-size:13px;color:#444;font-weight:normal;">2</div>
<div class="t " style="left:168px;top:934.00px;font-size:13px;color:#444;font-weight:normal;">3</div>
<div class="t " style="left:203px;top:934.00px;font-size:13px;color:#444;font-weight:normal;">4</div>
<div class="t " style="left:238px;top:934.00px;font-size:13px;color:#444;font-weight:normal;">5</div>
<div class="t " style="left:271.5px;top:934.00px;font-size:13px;color:#444;font-weight:normal;">...</div>
<svg class="b" style="left:313px;top:936px" width="6" height="10" viewBox="0 0 6 10"><path d="M0.5 0.2 L5.5 5 L0.5 9.8 Z" fill="#666"/></svg>
<svg class="b" style="left:351px;top:936px" width="8" height="10" viewBox="0 0 8 10"><path d="M0.5 0.2 L5.5 5 L0.5 9.8 Z" fill="#666"/><rect x="6.5" y="0" width="1.3" height="10" fill="#666"/></svg>
<div class="b" style="left:378px;top:919px;width:73px;height:35px;border:1px solid #dcdcdc;border-radius:2px;box-sizing:border-box;background:#fafafa"></div>
<div class="t " style="left:392px;top:930.00px;font-size:13px;color:#444;font-weight:normal;">12</div>
<svg class="b" style="left:427px;top:935px" width="11" height="8" viewBox="0 0 11 8"><path d="M1 1.2 L5.5 6.2 L10 1.2" fill="none" stroke="#c8c8c8" stroke-width="1.8"/></svg>
<div class="t " style="left:457px;top:929.63px;font-size:13.9px;color:#444;font-weight:normal;">itens por página</div>
<div class="t " style="left:1635.5px;top:933.23px;font-size:13.9px;color:#999;font-weight:normal;">Exibindo itens 1 - 12 de 223</div>
<svg class="b" style="left:1836px;top:932px" width="16" height="16" viewBox="0 0 16 16"><path d="M13.51 10.46 A6.3 6.3 0 1 1 11.6 2.8" fill="none" stroke="#777" stroke-width="1.7"/><path d="M14.8 0.9 V6.7 H9 Z" fill="#777"/></svg>
</body></html>
